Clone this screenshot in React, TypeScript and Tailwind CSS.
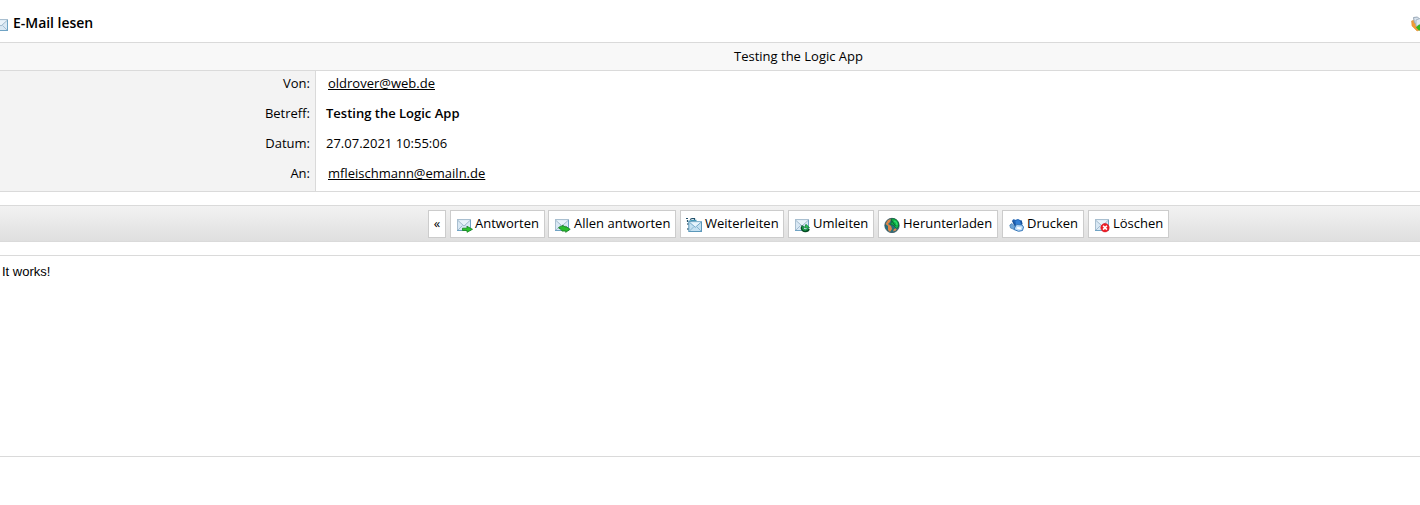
import React from "react";

type IconKind = "mail" | "reply" | "replyAll" | "forward" | "redirect" | "globe" | "print" | "delete";

function Envelope() {
  return (
    <>
      <rect x="0.5" y="2.5" width="13" height="11" fill="#d9e8f4" stroke="#a9bfd0" />
      <path d="M1 13 5.5 8.5M13 13 8.5 8.5" stroke="#a3bdd3" fill="none" />
      <path d="M1 3.5 7 9 13 3.5" fill="#e9f2fa" stroke="#a2bacd" />
      <path d="M0 13.5h14M13.5 3v10" stroke="#6fa3c4" />
    </>
  );
}

function Icon({ kind }: { kind: IconKind }) {
  return (
    <svg width="16" height="16" viewBox="0 0 16 16" className="shrink-0" fill="none">
      {kind === "globe" && (
        <>
          <circle cx="8" cy="8.5" r="7.2" fill="#286f7c" stroke="#34515c" strokeWidth=".8" />
          <path d="M1.5 7 4 3l3-1-1 3-2 2 3 2 1 3-2 3-2-2V9zM10 12l3-1-1 2.5-3 1z" fill="#df8547" />
          <path d="M7 2c5-1 7 2 7.5 4.5v3.5l-2 1.5L9 8 6.5 7.5 8 4z" fill="#12b34a" stroke="#0a652e" strokeWidth=".7" />
          <path d="m7.5 3.5 4 5.5" stroke="#075c33" />
          <path d="M10 4c2 .5 3 2 3 4" stroke="#2be069" strokeWidth="1.2" />
        </>
      )}
      {kind === "print" && (
        <>
          <path d="M3.5 3 5 2l1 1 3-1 3 1.5 1 4-7 2.5z" fill="#1d62b4" />
          <path d="M6.5 4 9 3l2 1 1 3-5 1z" fill="#327fd4" />
          <path d="M.8 8 3 6.5l3 3-.5 3L1.5 11z" fill="#6fa6d8" stroke="#4b82b5" strokeWidth=".8" />
          <path d="m6 10 1.5-2.5 5.5.5 1.5 2-1 3.5-4 .8L5 12.5z" fill="#b9daf7" stroke="#3476b9" />
          <path d="m7.5 11.5 1-1.5 4 .5-1 2z" fill="#fff" />
          <path d="m3.5 3.5 2.5 5M12 3.5l1 4" stroke="#18529b" strokeWidth="1.4" />
        </>
      )}
      {kind === "forward" && (
        <>
          <path d="M0 1.5h2M4 2.5l2-1h2M8.5 1v2.5" stroke="#204e68" strokeWidth="1.2" />
          <path d="M1.5 3v2m.5 1v2m0 3v2" stroke="#274f66" strokeWidth="1.2" />
          <path d="m2.5 4.5 4-1h4" stroke="#4598b7" strokeWidth="1.4" />
          <rect x="2.8" y="4.8" width="12.7" height="9.7" fill="#c3e0f1" stroke="#5c98ba" />
          <path d="m3.5 14 4-4m7.5 4-4-4" stroke="#8bb6d0" />
          <path d="m3.5 5.3 5.8 5L15 5.3" fill="#e7f5fd" stroke="#75a9c8" />
        </>
      )}
      {kind !== "globe" && kind !== "print" && kind !== "forward" && <Envelope />}
      {kind === "reply" && <path d="M5.5 11.2H10V9.3l5.5 3-5.5 3v-1.8H5.5z" fill="#2ac52d" stroke="#168421" strokeWidth=".8" />}
      {kind === "replyAll" && (
        <path d="M3.5 11C4.5 9.5 6 9 7.5 9.3V8.2l3.2 2V9.3l4.5 3-4.5 3v-1.2H7L6.5 12.8z" fill="#28bd2c" stroke="#147b24" strokeWidth=".8" />
      )}
      {kind === "redirect" && (
        <>
          <path d="M8 8.8c-2 2.7 0 5.3 2.5 5 1.8 0 2.7-.8 3-2" stroke="#064923" strokeWidth="2.8" />
          <path d="M8 9.2c-1 2.5.4 4.2 2.5 4 1.2 0 2.2-.8 2.5-2" stroke="#16a64a" strokeWidth="1.3" />
          <path d="m9.5 10.8 1.5-3.5 3.5 3.5z" fill="#2bc854" stroke="#087431" strokeWidth=".7" />
        </>
      )}
      {kind === "delete" && (
        <>
          <circle cx="10" cy="10.7" r="4.2" fill="#ef1c25" stroke="#d31822" strokeWidth=".6" />
          <path d="m8.1 8.8 3.8 3.8m0-3.8-3.8 3.8" stroke="white" strokeWidth="1.6" />
        </>
      )}
    </svg>
  );
}

const actions: { label: string; icon: IconKind; width: string; gap: string }[] = [
  { label: "Antworten", icon: "reply", width: "w-[95px] pl-1.5", gap: "ml-0.5" },
  { label: "Allen antworten", icon: "replyAll", width: "w-[128px] pl-1.5 -ml-px", gap: "ml-[3px]" },
  { label: "Weiterleiten", icon: "forward", width: "w-[104px] pl-[5px]", gap: "ml-[3px]" },
  { label: "Umleiten", icon: "redirect", width: "w-[86px] pl-1.5", gap: "ml-0.5" },
  { label: "Herunterladen", icon: "globe", width: "w-[120px] pl-[5px]", gap: "ml-[3px]" },
  { label: "Drucken", icon: "print", width: "w-[82px] pl-1.5", gap: "ml-0.5" },
  { label: "Löschen", icon: "delete", width: "w-[81px] pl-1.5", gap: "ml-0.5" },
];

const details = [
  { label: "Von:", value: "oldrover@web.de", style: "pl-3 underline underline-offset-1" },
  { label: "Betreff:", value: "Testing the Logic App", style: "pl-2.5 font-semibold" },
  { label: "Datum:", value: "27.07.2021 10:55:06", style: "pl-2.5" },
  { label: "An:", value: "mfleischmann@emailn.de", style: "pl-3 underline underline-offset-1" },
];

export default function App() {
  return (
    <div className="h-[505px] w-full overflow-hidden bg-white font-['Open_Sans',sans-serif] text-[13px] leading-[18px] text-black">
      <div className="w-[1597px]">
        <header className="flex h-[42px] items-start">
          <div className="-ml-[6px] mt-[17px]"><Icon kind="mail" /></div>
          <h1 className="ml-[3px] mt-3.5 text-sm font-semibold leading-[18px] tracking-[-0.03px]">E-Mail lesen</h1>
          <svg className="ml-auto mr-[170px] mt-4 shrink-0" width="16" height="16" viewBox="0 0 16 16">
            <path d="M.5 5 3 4l5 4 1 6-3 1-5-5z" fill="#f29b35" stroke="#dc8b30" strokeWidth=".5" />
            <path d="m2.5 1.5 4-.5 2 2v5l-5-1z" fill="#d9e3ee" stroke="#98a7b6" />
            <path d="m5 4 5-2 5 2v6H5z" fill="#dfe8f0" stroke="#a5b4c4" />
            <path d="m5 11.5 3-3H15v6H8z" fill="#35b51f" />
          </svg>
        </header>
        <div className="h-[29px] border-y border-[#dadada] bg-[#f8f8f8] pt-1 text-center">Testing the Logic App</div>
        <section className="border-b border-[#dadada]">
          {details.map((row) => (
            <div key={row.label} className="flex h-[30px]">
              <div className="w-[316px] border-r border-[#dadada] bg-[#f3f3f3] pr-[5px] pt-[3px] text-right">{row.label}</div>
              <div className={"pt-[3px] " + row.style}>{row.value}</div>
            </div>
          ))}
        </section>
        <nav className="mt-[13px] flex h-[37px] items-center justify-center gap-1 border-y border-[#dadada] bg-linear-to-b from-[#f2f2f2] to-[#dfdfdf]">
          <button className="h-7 w-[18px] border border-[#cccccc] bg-white pb-px">«</button>
          {actions.map((action) => (
            <button key={action.label} className={"flex h-7 shrink-0 items-start border border-[#cccccc] bg-white " + action.width}>
              <span className="mt-1.5"><Icon kind={action.icon} /></span>
              <span className={"mt-[3px] whitespace-nowrap " + action.gap}>{action.label}</span>
            </button>
          ))}
        </nav>
        <main className="mt-[13px] h-[202px] border-y border-[#dadada] pl-0.5 pt-[7px] font-['Liberation_Sans',Arial,sans-serif] text-[13px]">
          It works!
        </main>
      </div>
    </div>
  );
}
